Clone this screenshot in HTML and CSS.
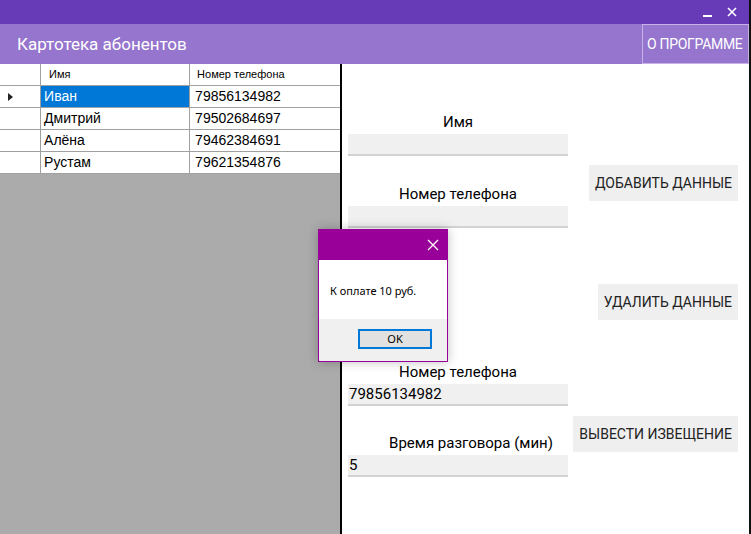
FILE: index.html
```html
<!DOCTYPE html>
<html lang="ru">
<head>
<meta charset="utf-8">
<link rel="stylesheet" href="styles.css">
</head>
<body>
<div class="window">
  <div class="titlebar">
    <svg class="ctl" width="12" height="12" viewBox="0 0 12 12"><rect x="1" y="9" width="9" height="2" fill="#fff"/></svg>
    <svg class="ctl" width="12" height="12" viewBox="0 0 12 12"><path d="M2 2 L10 10 M10 2 L2 10" stroke="#fff" stroke-width="1.6"/></svg>
  </div>
  <div class="header">
    <div class="title">Картотека абонентов</div>
    <div class="about">О ПРОГРАММЕ</div>
  </div>
  <div class="main">
    <div class="grid-pane">
      <table class="grid">
        <tr class="head"><td class="rh"></td><td class="c1">Имя</td><td class="c2">Номер телефона</td></tr>
        <tr><td class="rh"><span class="arrow"></span></td><td class="c1 sel">Иван</td><td class="c2">79856134982</td></tr>
        <tr><td class="rh"></td><td class="c1">Дмитрий</td><td class="c2">79502684697</td></tr>
        <tr><td class="rh"></td><td class="c1">Алёна</td><td class="c2">79462384691</td></tr>
        <tr><td class="rh"></td><td class="c1">Рустам</td><td class="c2">79621354876</td></tr>
      </table>
    </div>
    <div class="form-pane">
      <div class="fields">
        <div class="label l1">Имя</div>
        <div class="input"></div>
        <div class="label l2">Номер телефона</div>
        <div class="input"></div>
        <div class="label l3">Номер телефона</div>
        <div class="input">79856134982</div>
        <div class="label l4">Время разговора (мин)</div>
        <div class="input">5</div>
      </div>
      <div class="buttons">
        <div class="btn b1">ДОБАВИТЬ ДАННЫЕ</div>
        <div class="btn b2">УДАЛИТЬ ДАННЫЕ</div>
        <div class="btn b3">ВЫВЕСТИ ИЗВЕЩЕНИЕ</div>
      </div>
    </div>
  </div>
  <div class="dialog">
    <div class="dlg-title">
      <svg width="12" height="12" viewBox="0 0 12 12"><path d="M1 1 L11 11 M11 1 L1 11" stroke="#fff" stroke-width="1.3"/></svg>
    </div>
    <div class="dlg-body">К оплате 10 руб.</div>
    <div class="dlg-foot"><div class="ok">OK</div></div>
  </div>
</div>
</body>
</html>
```
FILE: styles.css
```css
* { box-sizing: border-box; }
html, body { margin: 0; padding: 0; }
body { width: 751px; height: 534px; overflow: hidden; background: #fff; font-family: Roboto, "Noto Sans", sans-serif; }
.window { position: relative; width: 751px; height: 534px; display: flex; flex-direction: column; border-right: 2px solid #111; }
.titlebar { height: 24px; background: #673ab7; display: flex; justify-content: flex-end; align-items: center; gap: 12px; padding-right: 11px; }
.ctl { display: block; }
.header { height: 40px; background: #9575cd; display: flex; align-items: stretch; justify-content: space-between; }
.title { color: #fff; font-size: 17px; line-height: 40px; padding-left: 17px; }
.about { color: #fff; font-size: 14px; font-weight: 400; line-height: 38px; border: 1px solid #c5b3e6; padding: 0 0 0 4px; width: 107px; white-space: nowrap; overflow: hidden; letter-spacing: -0.3px; }
.main { flex: 1; display: flex; min-height: 0; }
.grid-pane { width: 342px; background: #ababab; border-right: 2px solid #000; }
.grid { border-collapse: collapse; background: #fff; font-family: "Liberation Sans", Arial, sans-serif; font-size: 14px; color: #000; }
.grid td { border: 1px solid #a0a0a0; height: 22px; padding: 0 0 0 3px; white-space: nowrap; }
.grid tr:first-child td { border-top: none; }
.grid td.rh { border-left: none; width: 41px; padding: 0; position: relative; }
.grid td.c1 { width: 150px; }
.grid td.c2 { width: 151px; border-right: none; padding-left: 5px; }
.grid tr.head td { height: 21px; font-size: 11px; padding-left: 8px; }
.grid tr.head td.rh { padding: 0; }
.grid tr.head td.c2 { padding-left: 7px; }
.grid td.sel { background: #0078d7; color: #fff; }
.arrow { position: absolute; left: 8px; top: 7px; width: 0; height: 0; border-top: 4.5px solid transparent; border-bottom: 4.5px solid transparent; border-left: 5px solid #222; }
.form-pane { flex: 1; display: flex; justify-content: space-between; padding: 0 11px 0 6px; }
.fields { width: 220px; display: flex; flex-direction: column; }
.label { text-align: center; font-size: 15px; line-height: 18px; color: #000; margin-bottom: 3px; }
.l1 { margin-top: 49px; }
.l2 { margin-top: 29px; }
.l3 { margin-top: 135px; }
.l4 { margin-top: 28px; padding-left: 26px; }
.input { height: 22px; background: #f0f0f0; border-bottom: 2px solid #d2d2d2; font-size: 15px; line-height: 20px; color: #000; padding-left: 1px; }
.buttons { display: flex; flex-direction: column; align-items: flex-end; }
.btn { height: 36px; background: #efefef; font-size: 14px; font-weight: 400; line-height: 36px; color: #222; padding: 0 6px; letter-spacing: 0; white-space: nowrap; }
.b1 { margin-top: 101px; }
.b2 { margin-top: 83px; }
.b3 { margin-top: 96px; }
.dialog { position: absolute; left: 318px; top: 229px; width: 130px; height: 133px; border: 1px solid #990099; background: #fff; box-shadow: 0 0 10px rgba(0,0,0,0.25); display: flex; flex-direction: column; }
.dlg-title { height: 30px; background: #990099; display: flex; justify-content: flex-end; align-items: center; padding-right: 8px; }
.dlg-title svg { display: block; }
.dlg-body { height: 59px; font-family: "Noto Sans", "Liberation Sans", sans-serif; font-size: 11px; padding: 23px 0 0 11px; color: #000; }
.dlg-foot { flex: 1; background: #f0f0f0; padding: 10px 0 0 39px; }
.ok { width: 74px; height: 20px; border: 2px solid #0078d7; background: #e1e1e1; text-align: center; font-family: "Noto Sans", "Liberation Sans", sans-serif; font-size: 11px; line-height: 16px; color: #000; }
```
